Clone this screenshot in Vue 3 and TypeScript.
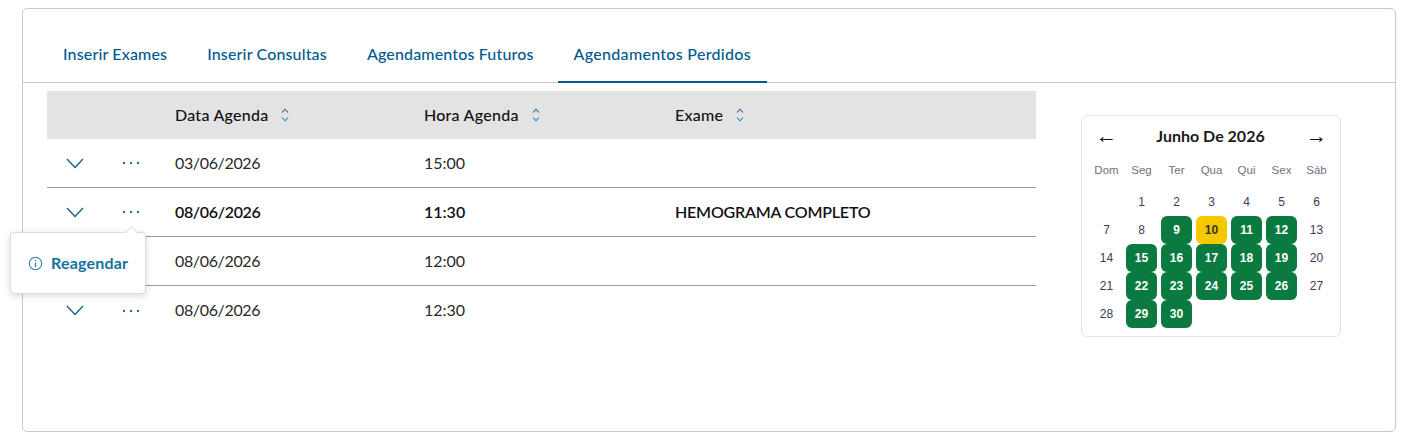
<script setup lang="ts">
const tabs = ['Inserir Exames', 'Inserir Consultas', 'Agendamentos Futuros', 'Agendamentos Perdidos']
const columns = ['Data Agenda', 'Hora Agenda', 'Exame']
const rows = [
  { date: '03/06/2026', time: '15:00', exam: '', bold: false },
  { date: '08/06/2026', time: '11:30', exam: 'HEMOGRAMA COMPLETO', bold: true },
  { date: '08/06/2026', time: '12:00', exam: '', bold: false },
  { date: '08/06/2026', time: '12:30', exam: '', bold: false },
]
const weekDays = ['Dom', 'Seg', 'Ter', 'Qua', 'Qui', 'Sex', 'Sáb']
const green = [9, 11, 12, 15, 16, 17, 18, 19, 22, 23, 24, 25, 26, 29, 30]
const days = Array.from({ length: 30 }, (_, i) => i + 1)
const dayClass = (d: number) => (d === 10 ? 'today' : green.includes(d) ? 'available' : '')
</script>

<template>
  <div class="card">
    <nav class="tabs">
      <div v-for="(t, i) in tabs" :key="t" class="tab" :class="{ active: i === 3 }">{{ t }}</div>
    </nav>
    <div class="content">
      <div class="table">
        <div class="row head">
          <div></div>
          <div v-for="c in columns" :key="c" class="th">
            <span>{{ c }}</span>
            <svg class="sort" width="8" height="14" viewBox="0 0 8 14" fill="none">
              <path d="M1 4.5 4 1.2 7 4.5" stroke="#2f6390" stroke-width="1.1" />
              <path d="M1 9.5 4 12.8 7 9.5" stroke="#2f7fae" stroke-width="1.1" />
            </svg>
          </div>
        </div>
        <div v-for="(r, i) in rows" :key="i" class="row body" :class="{ bold: r.bold, last: i === 3 }">
          <div class="actions">
            <svg class="chev" width="18" height="11" viewBox="0 0 18 11" fill="none">
              <path d="M1 1 9 9.5 17 1" stroke="#13658f" stroke-width="1.4" />
            </svg>
            <svg class="dots" width="18" height="4" viewBox="0 0 18 4" fill="#13658f">
              <circle cx="2" cy="2" r="1.15" />
              <circle cx="9" cy="2" r="1.15" />
              <circle cx="16" cy="2" r="1.15" />
            </svg>
          </div>
          <div class="date">{{ r.date }}</div>
          <div>{{ r.time }}</div>
          <div class="exam">{{ r.exam }}</div>
        </div>
        <div class="popover">
          <svg width="15" height="15" viewBox="0 0 14 14" fill="none" stroke="#2b82aa">
            <circle cx="7" cy="7" r="5.8" stroke-width="1" />
            <path d="M7 6.2V10.2" stroke-width="1.2" />
            <circle cx="7" cy="4.1" r="0.7" fill="#2b82aa" stroke="none" />
          </svg>
          <span>Reagendar</span>
        </div>
      </div>
      <aside class="calendar">
        <div class="cal-head">
          <span class="arrow">←</span>
          <span class="title">Junho De 2026</span>
          <span class="arrow">→</span>
        </div>
        <div class="week">
          <span v-for="w in weekDays" :key="w">{{ w }}</span>
        </div>
        <div class="days">
          <div class="blank"></div>
          <div v-for="d in days" :key="d" class="day" :class="dayClass(d)">{{ d }}</div>
        </div>
      </aside>
    </div>
  </div>
</template>

<style>
html, body { margin: 0; background: #fff; }
</style>

<style scoped>
.card {
  box-sizing: border-box;
  width: 1374px;
  height: 424px;
  margin: 8px 0 0 22px;
  border: 1px solid #c8c8c8;
  border-radius: 5px;
  font-family: Lato, "Open Sans", sans-serif;
  color: #1c1c1c;
}
.tabs {
  display: flex;
  gap: 8px;
  height: 74px;
  box-sizing: border-box;
  padding-left: 24px;
  border-bottom: 1px solid #c8c8c8;
}
.tab {
  box-sizing: border-box;
  height: 74px;
  padding: 35px 16px 0;
  font-size: 16px;
  letter-spacing: 0.15px;
  line-height: 20px;
  font-weight: 500;
  color: #005a8f;
  white-space: nowrap;
}
.tab.active { border-bottom: 2px solid #005a8f; letter-spacing: 0.3px; }
.content { display: flex; align-items: flex-start; }
.table {
  position: relative;
  width: 989px;
  margin: 8px 0 0 24px;
}
.row {
  display: grid;
  grid-template-columns: 128px 249px 251px 1fr;
  align-items: center;
  font-size: 16px;
}
.head {
  height: 48px;
  background: #e3e3e3;
  font-weight: 500;
  color: #111;
  letter-spacing: 0.25px;
}
.th { display: flex; align-items: center; gap: 13px; }
.th span { position: relative; top: -1px; }
.sort { flex: none; }
.body {
  height: 49px;
  box-sizing: border-box;
  border-bottom: 1px solid #9a9a9a;
  padding-bottom: 2px;
  color: #2a2a2a;
}
.body.last { border-bottom: 0; }
.body.bold { font-weight: 600; color: #111; }
.date { letter-spacing: -0.35px; }
.exam { letter-spacing: -0.2px; }
.actions { display: flex; align-items: center; padding-left: 19px; padding-top: 2px; }
.chev { flex: none; }
.dots { flex: none; margin-left: 38px; }
.popover {
  position: absolute;
  left: -37px;
  top: 141px;
  box-sizing: border-box;
  width: 136px;
  height: 62px;
  display: flex;
  align-items: center;
  gap: 8px;
  padding-left: 17px;
  background: #fff;
  border-radius: 4px;
  border: 1px solid #dcdcdc;
  box-shadow: 0 2px 7px rgba(0, 0, 0, 0.15);
  color: #13729c;
  font-size: 16px;
  letter-spacing: 0.2px;
  font-weight: 700;
}
.popover span { position: relative; top: -1px; }
.popover::before {
  content: "";
  position: absolute;
  left: 116px;
  top: -5px;
  width: 8px;
  height: 8px;
  background: #fff;
  border-left: 1px solid #dcdcdc;
  border-top: 1px solid #dcdcdc;
  transform: rotate(45deg);
}
.calendar {
  box-sizing: border-box;
  width: 260px;
  height: 222px;
  margin: 32px 0 0 45px;
  padding: 0 6px 0 7px;
  border: 1px solid #e4e4e4;
  border-radius: 6px;
}
.cal-head {
  display: flex;
  justify-content: space-between;
  align-items: center;
  height: 42px;
  padding: 0 7px;
}
.title { font-size: 16px; font-weight: 700; color: #1a1a1a; position: relative; top: -2px; left: -1px; }
.arrow { font-family: "Liberation Sans", sans-serif; font-size: 21px; line-height: 24px; color: #111; position: relative; top: -1px; }
.week, .days {
  display: grid;
  grid-template-columns: repeat(7, 1fr);
  text-align: center;
  font-family: "Liberation Sans", Arial, sans-serif;
}
.week { font-size: 11.5px; color: #70707f; height: 30px; line-height: 24px; }
.days { grid-auto-rows: 28px; font-size: 12px; color: #3c3c5a; }
.day {
  margin: 0 2px;
  display: flex;
  align-items: center;
  justify-content: center;
  border-radius: 6px;
}
.available { background: #0b7a40; color: #fff; font-weight: 700; }
.today { background: #f5c800; color: #333; font-weight: 700; }
</style>
